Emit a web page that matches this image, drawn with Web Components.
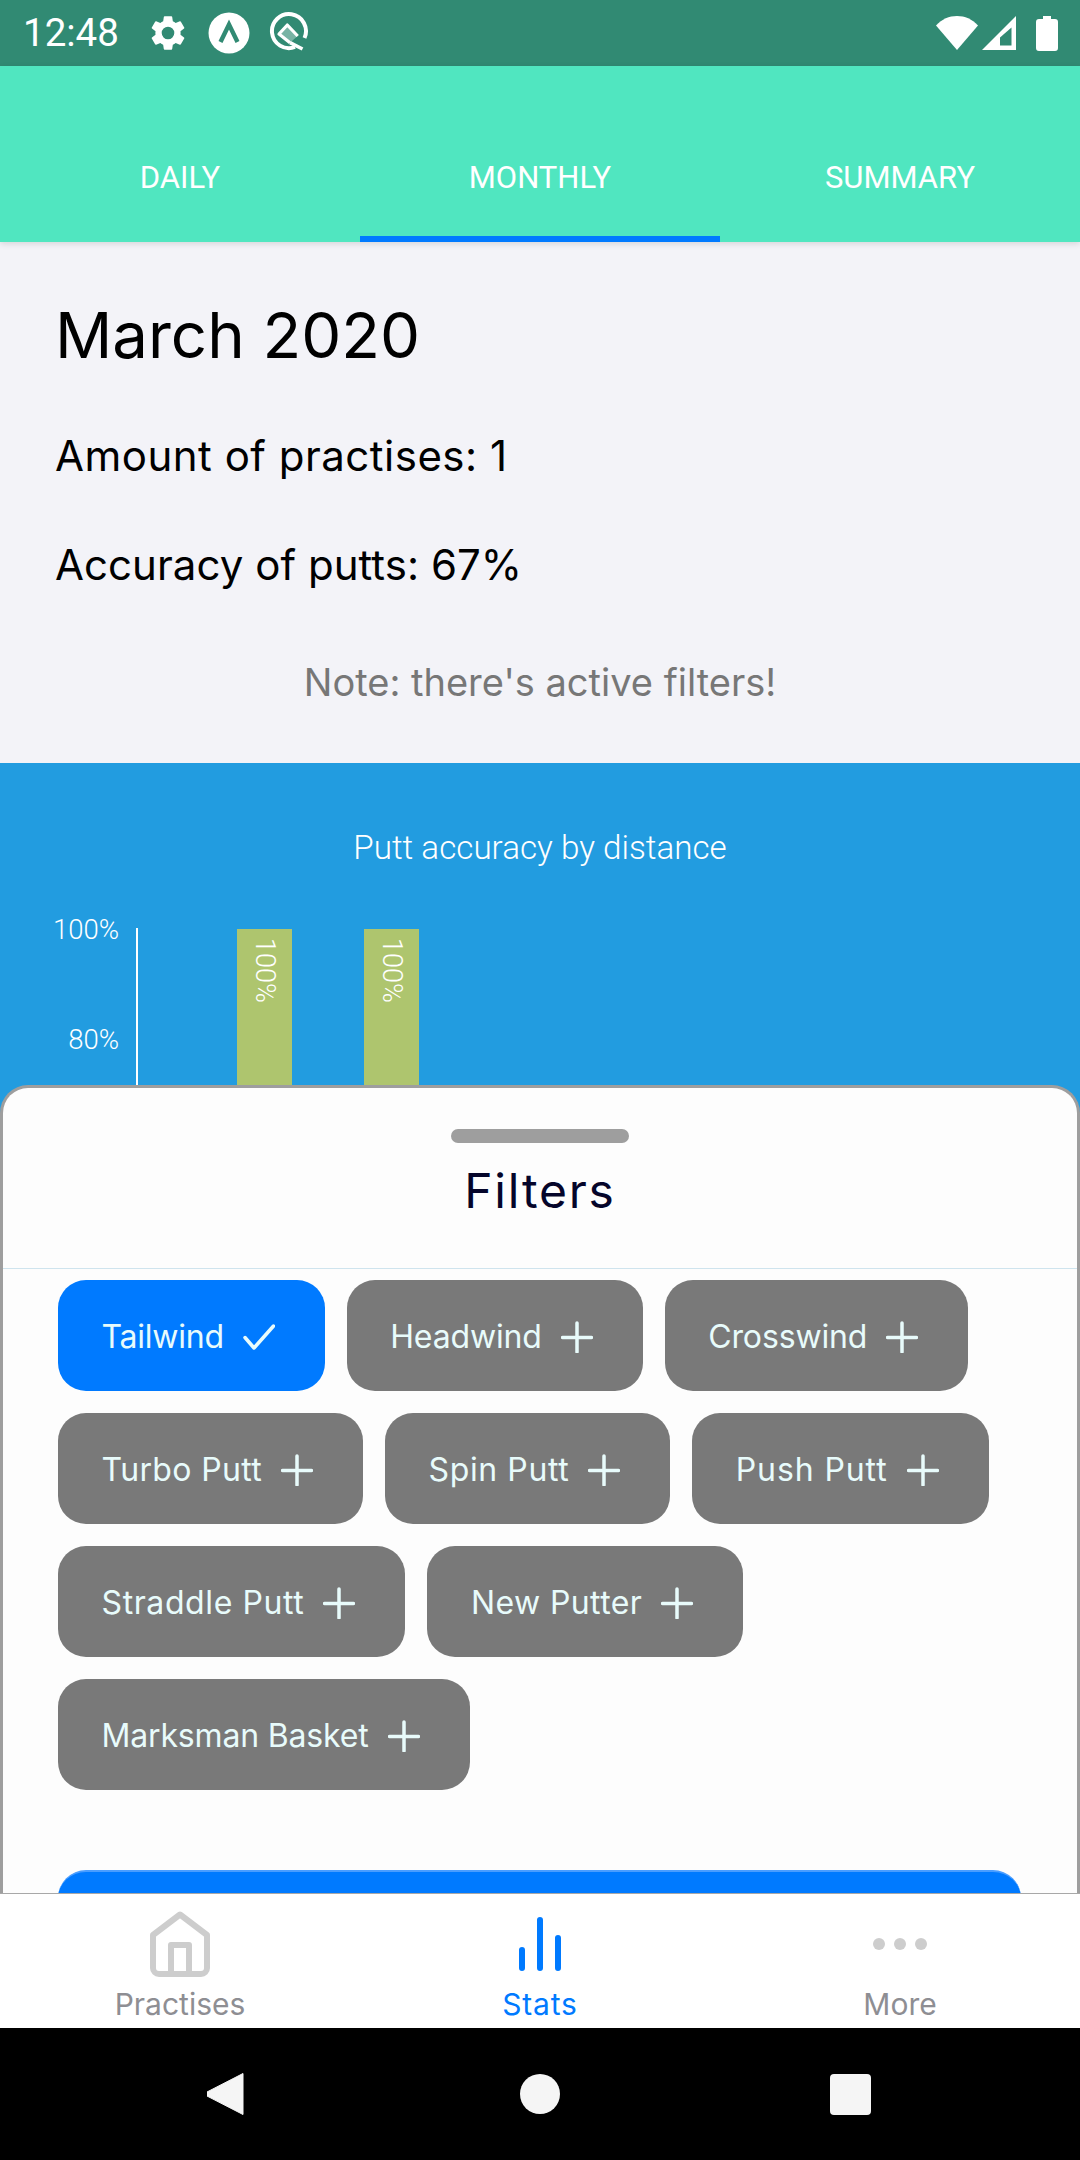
<!DOCTYPE html>
<html lang="en">
<head>
<meta charset="utf-8">
<title>Stats</title>
<style>
html,body{margin:0;padding:0;background:#000}
body{width:1080px;height:2160px;overflow:hidden;font-family:"Inter","Roboto",sans-serif}
</style>
</head>
<body>
<app-root>
  <status-bar slot="status" time="12:48"></status-bar>
  <top-tabs slot="tabs">
    <tab-item>DAILY</tab-item>
    <tab-item active>MONTHLY</tab-item>
    <tab-item>SUMMARY</tab-item>
  </top-tabs>
  <stat-summary slot="main">
    <span slot="heading">March 2020</span>
    <span slot="line1">Amount of practises: 1</span>
    <span slot="line2">Accuracy of putts: 67%</span>
    <span slot="note">Note: there's active filters!</span>
  </stat-summary>
  <chart-panel slot="main" heading="Putt accuracy by distance"></chart-panel>
  <filter-sheet slot="overlay">
    <span slot="title">Filters</span>
    <filter-chip selected style="letter-spacing:-.25px">Tailwind</filter-chip>
    <filter-chip style="letter-spacing:-.15px">Headwind</filter-chip>
    <filter-chip style="letter-spacing:-.15px">Crosswind</filter-chip>
    <filter-chip style="letter-spacing:.35px">Turbo Putt</filter-chip>
    <filter-chip style="letter-spacing:.6px">Spin Putt</filter-chip>
    <filter-chip style="letter-spacing:.9px">Push Putt</filter-chip>
    <filter-chip style="letter-spacing:.6px">Straddle Putt</filter-chip>
    <filter-chip style="letter-spacing:.4px">New Putter</filter-chip>
    <filter-chip style="letter-spacing:-.17px">Marksman Basket</filter-chip>
  </filter-sheet>
  <bottom-tabs slot="bottom"></bottom-tabs>
  <nav-bar slot="nav"></nav-bar>
</app-root>
<script>
function def(name, css, html, init){
  customElements.define(name, class extends HTMLElement{
    constructor(){super();this.attachShadow({mode:'open'}).innerHTML='<style>'+css+'</style>'+(typeof html==='function'?html(this):html);}
    connectedCallback(){ if(init) init(this); }
  });
}
def('app-root',`
  :host{display:flex;flex-direction:column;width:1080px;height:2160px;overflow:hidden}
  .main{position:relative;flex:1;min-height:0;overflow:hidden;background:#f3f3f8;display:flex;flex-direction:column}
  .tabs{position:relative;z-index:1}
`,`<slot name="status"></slot><div class="tabs"><slot name="tabs"></slot></div>
   <div class="main"><slot name="main"></slot><slot name="overlay"></slot></div>
   <slot name="bottom"></slot><slot name="nav"></slot>`);

def('status-bar',`
  :host{display:flex;align-items:center;height:66px;flex:none;background:#318a73;color:#fff;padding:0 22px 0 23px;box-sizing:border-box}
  .t{font:400 38.5px/66px "Roboto",sans-serif;width:105px}
  svg{display:block;flex:none}
  .sp{flex:1}
`,el=>`<span class="t">${el.getAttribute('time')}</span>
  <svg width="42" height="42" viewBox="0 0 24 24" fill="#fff" style="margin-left:19px"><path d="M19.14 12.94c.04-.3.06-.61.06-.94 0-.32-.02-.64-.07-.94l2.03-1.58a.49.49 0 0 0 .12-.61l-1.92-3.32a.49.49 0 0 0-.59-.22l-2.39.96c-.5-.38-1.03-.7-1.62-.94l-.36-2.54a.48.48 0 0 0-.48-.41h-3.84a.47.47 0 0 0-.47.41l-.36 2.54c-.59.24-1.13.57-1.62.94l-2.39-.96a.48.48 0 0 0-.59.22L2.74 8.87a.47.47 0 0 0 .12.61l2.03 1.58c-.05.3-.09.63-.09.94s.02.64.07.94l-2.03 1.58a.49.49 0 0 0-.12.61l1.92 3.32c.12.22.37.29.59.22l2.39-.96c.5.38 1.03.7 1.62.94l.36 2.54c.05.24.24.41.48.41h3.84c.24 0 .44-.17.47-.41l.36-2.54c.59-.24 1.13-.56 1.62-.94l2.39.96c.22.08.47 0 .59-.22l1.92-3.32a.47.47 0 0 0-.12-.61l-2.01-1.58zM12 15.6A3.6 3.6 0 1 1 12 8.4a3.6 3.6 0 0 1 0 7.2z"/></svg>
  <svg width="42" height="42" viewBox="0 0 42 42" style="margin-left:19px"><circle cx="21" cy="21" r="20.5" fill="#fff"/><path d="M12.5 30 21 12.5 29.5 30" fill="none" stroke="#318a73" stroke-width="4.4"/></svg>
  <svg width="42" height="42" viewBox="0 0 42 42" style="margin-left:19px" fill="none" stroke="#fff"><path d="M35.5 26A17 17 0 1 0 26 35" stroke-width="4"/><path d="M18.300 13 10 22 21 30.700 28.700 24z" fill="#fff" fill-opacity=".35" stroke="none"/><path d="M28.700 24 18.300 13 10 22 21 30.700" stroke-width="3.200" stroke-linejoin="round"/><path d="M21 30.700 33.500 37" stroke-width="3.600"/></svg>
  <span class="sp"></span>
  <svg width="42" height="36" viewBox="0 0 42 36"><path d="M0 10.5C6 4 13 1 21 1s15 3 21 9.5L21 35z" fill="#fff"/></svg>
  <svg width="36" height="36" viewBox="0 0 36 36" style="margin-left:3px"><path d="M35 1v34H1z" fill="#fff"/><path d="M30.500 12.500v18H19v-8z" fill="#318a73"/></svg>
  <svg width="22" height="36" viewBox="0 0 22 36" style="margin-left:19px"><path d="M7 1h8v3h4a3 3 0 0 1 3 3v26a3 3 0 0 1-3 3H3a3 3 0 0 1-3-3V7a3 3 0 0 1 3-3h4z" fill="#fff"/></svg>`);

def('top-tabs',`
  :host{display:grid;grid-template-columns:repeat(3,1fr);height:176px;background:#50e6c0;box-shadow:0 2px 6px rgba(0,0,0,.12)}
`,`<slot></slot>`);

def('tab-item',`
  :host{display:block;box-sizing:border-box;height:176px;padding-top:88px;text-align:center;color:#fff;font:400 31px/48px "Roboto",sans-serif}
  :host([active]){border-bottom:6px solid #007aff}
`,`<slot></slot>`);

def('stat-summary',`
  :host{display:block;flex:none;box-sizing:border-box;height:521px;padding:63px 0 0 55px;color:#000;font-family:"Inter",sans-serif}
  div{line-height:60px;white-space:nowrap}
  .h{font-size:63.500px}
  .a{font-size:42px;letter-spacing:.5px;margin-top:61px}
  .b{font-size:42px;letter-spacing:.05px;margin-top:49px}
  .n{font-size:38px;margin:57px 0 0 -55px;text-align:center;color:#777}
`,`<div class="h"><slot name="heading"></slot></div><div class="a"><slot name="line1"></slot></div><div class="b"><slot name="line2"></slot></div><div class="n"><slot name="note"></slot></div>`);

def('chart-panel',`
  :host{display:block;flex:1;background:#229ce0;color:#fff;font-family:"Roboto",sans-serif}
  .title{padding-top:65px;font-size:33.200px;font-weight:300;line-height:40px;text-align:center}
  .chart{display:flex;margin-top:61px}
  .ticks{width:119px;flex:none;font-size:27.500px;font-weight:300;text-align:right;margin-right:17px;height:0;padding-top:1px}
  .ticks div{height:110px;line-height:34px;box-sizing:border-box}
  .ticks div:first-child{margin-top:-17px}
  .plot{border-left:2px solid #fff;height:550px;display:flex;gap:72px;padding-left:99px;margin-top:-1px;padding-top:1px}
  .bar{width:55px;height:550px;background:#aec56e;box-sizing:border-box;padding-top:9px;display:flex;justify-content:center}
  .bar span{writing-mode:vertical-rl;font-size:27px;font-weight:300;line-height:1;height:max-content}
`,el=>`<div class="title">${el.getAttribute('heading')}</div>
 <div class="chart"><div class="ticks"><div>100%</div><div>80%</div></div>
 <div class="plot"><div class="bar"><span>100%</span></div><div class="bar"><span>100%</span></div></div></div>`);

def('filter-sheet',`
  :host{position:absolute;left:0;right:0;top:843px;height:900px;box-sizing:border-box;background:#fdfdfd;border:3px solid #9e9e9e;border-bottom:0;border-radius:28px 28px 0 0;overflow:hidden;display:block}
  .head{height:181px;box-sizing:border-box;padding-top:41px;border-bottom:1px solid #cfe4ee;text-align:center}
  .handle{width:178px;height:14px;border-radius:7px;background:#9e9e9e;margin:0 auto}
  .title{font:400 48px/60px "Inter",sans-serif;letter-spacing:1.8px;color:#05052a;margin-top:18px}
  .chips{display:flex;flex-wrap:wrap;gap:22px;padding:11px 56px 0 55px}
  .btn{height:120px;margin:80px 56px 0 55px;background:#007aff;border-radius:28px;border-top:2px solid #4a9dff;box-sizing:border-box}
`,`<div class="head"><div class="handle"></div><div class="title"><slot name="title"></slot></div></div>
  <div class="chips"><slot></slot></div><div class="btn"></div>`);

def('filter-chip',`
  :host{display:flex;align-items:center;height:111px;box-sizing:border-box;padding:2px 50px 0 43.5px;gap:19px;border-radius:28px;background:#797979;color:#e8fbfb;font:400 32px/40px "Inter",sans-serif;white-space:nowrap}
  :host([selected]){background:#007aff}
  svg{display:block;flex:none}
`,el=>`<slot></slot><svg width="32" height="32" viewBox="0 0 32 32" fill="none" stroke="#e8fbfb" stroke-width="3.500" stroke-linecap="round" stroke-linejoin="round">${el.hasAttribute('selected')?'<path d="M2 16.500 11 27 30.500 5"/>':'<path d="M16 2v29M1.500 16.500h29"/>'}</svg>`);

def('bottom-tabs',`
  :host{display:grid;grid-template-columns:repeat(3,1fr);height:135px;flex:none;box-sizing:border-box;border-top:1px solid #a8a8a8;background:#fff;position:relative;z-index:1;font:400 30px/36px "Inter",sans-serif;color:#8e8e93;text-align:center}
  .i{display:flex;flex-direction:column;align-items:center;padding-top:17px}
  svg{display:block}
  span{margin-top:9px}
  .on{color:#007aff;letter-spacing:.8px}
`,`<div class="i"><svg width="66" height="66" viewBox="0 0 66 66" fill="none" stroke="#cdcdcd" stroke-width="6" stroke-linejoin="round"><path d="M6 24 33 3.500 60 24V57a6 6 0 0 1-6 6H12a6 6 0 0 1-6-6z"/><path d="M24 63V34H42V63"/></svg><span>Practises</span></div>
  <div class="i on"><svg width="66" height="66" viewBox="0 0 66 66" fill="none" stroke="#007aff" stroke-width="6" stroke-linecap="round"><path d="M15 39V57M33 9V57M51 27V57"/></svg><span>Stats</span></div>
  <div class="i"><svg width="66" height="66" viewBox="0 0 66 66" fill="#cdcdcd"><circle cx="12" cy="33" r="6"/><circle cx="33" cy="33" r="6"/><circle cx="54" cy="33" r="6"/></svg><span>More</span></div>`);

def('nav-bar',`
  :host{display:flex;align-items:center;height:132px;flex:none;background:#000;position:relative;z-index:1;padding-left:207px;box-sizing:border-box}
  svg{display:block;flex:none}
`,`<svg width="38" height="44" viewBox="2 0 38 44" fill="#f5f5f5"><path d="M38 1.500V42.500L2 24a2.500 2.500 0 0 1 0-4z" stroke="#f5f5f5" stroke-width="1" stroke-linejoin="round"/></svg>
  <svg width="40" height="40" viewBox="0 0 40 40" fill="#f5f5f5" style="margin-left:275px"><circle cx="20" cy="20" r="20"/></svg>
  <svg width="41" height="41" viewBox="0 0 41 41" fill="#f5f5f5" style="margin-left:270px"><rect width="41" height="41" rx="4"/></svg>`);
</script>
</body>
</html>
